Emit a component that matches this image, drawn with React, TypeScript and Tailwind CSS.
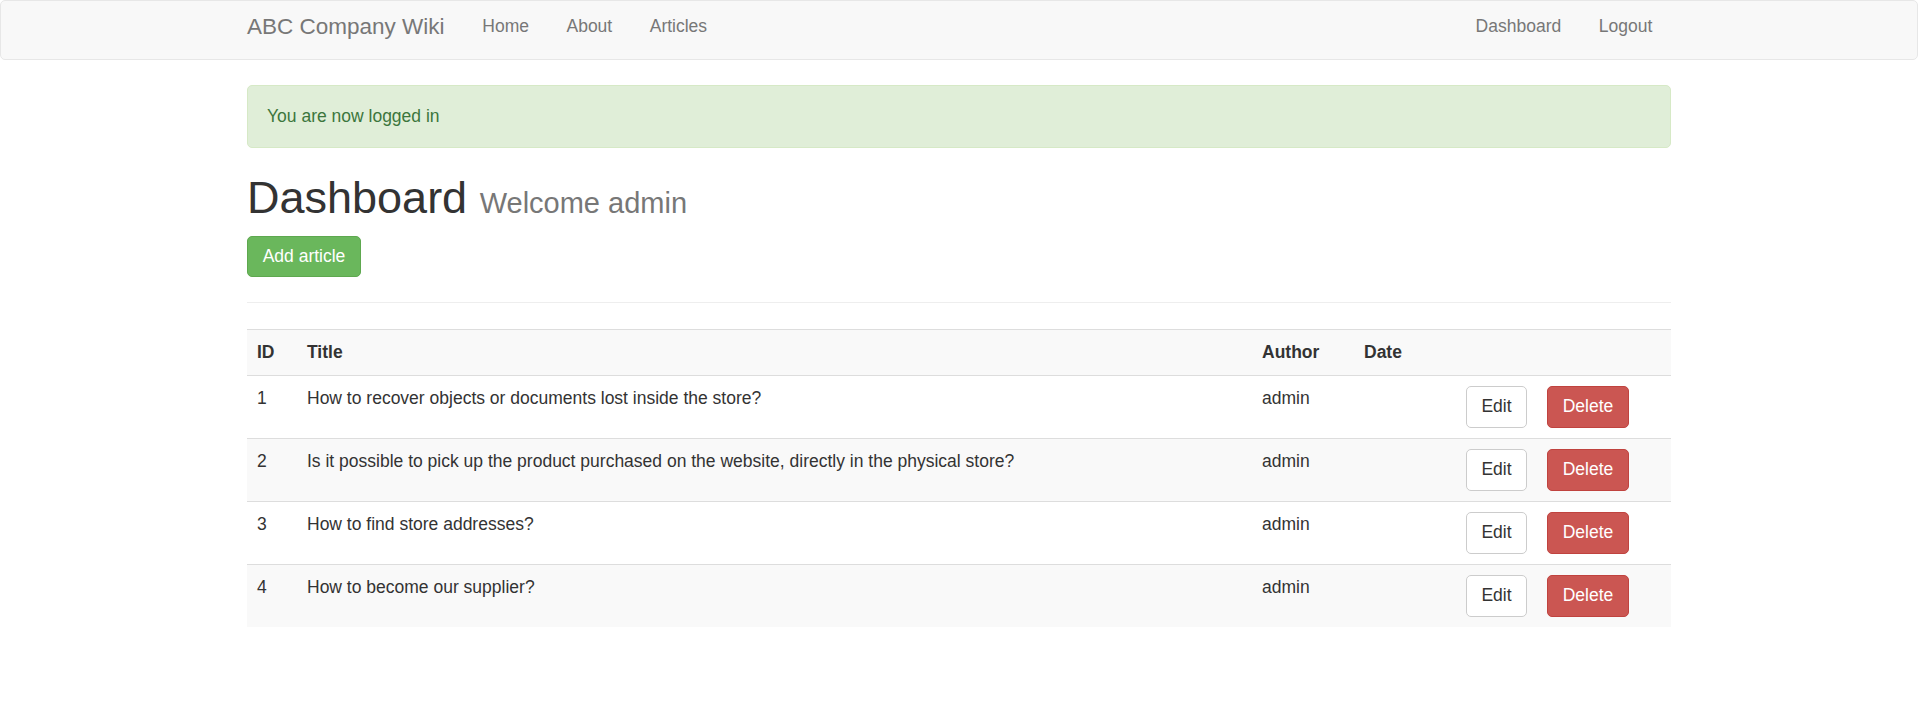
const articles = [
  { id: 1, title: "How to recover objects or documents lost inside the store?", author: "admin" },
  { id: 2, title: "Is it possible to pick up the product purchased on the website, directly in the physical store?", author: "admin" },
  { id: 3, title: "How to find store addresses?", author: "admin" },
  { id: 4, title: "How to become our supplier?", author: "admin" },
];

function Navbar() {
  return (
    <nav className="h-[60px] w-full rounded-[5px] border border-[#e7e7e7] bg-[#f8f8f8]">
      <div className="mx-auto flex h-full w-[1424px] items-center justify-between pb-[7px]">
        <div className="flex items-center">
          <a href="#" className="pr-[19px] text-[22.5px] leading-[25px] text-[#777]">
            ABC Company Wiki
          </a>
          {["Home", "About", "Articles"].map((link) => (
            <a key={link} href="#" className="px-[18.75px] text-[17.5px] leading-[25px] text-[#777]">
              {link}
            </a>
          ))}
        </div>
        <div className="flex items-center">
          {["Dashboard", "Logout"].map((link) => (
            <a key={link} href="#" className="px-[18.75px] text-[17.5px] leading-[25px] text-[#777]">
              {link}
            </a>
          ))}
        </div>
      </div>
    </nav>
  );
}

export default function App() {
  return (
    <div className="min-h-screen bg-white font-['Liberation_Sans',Arial,sans-serif] text-[17.5px] leading-[25px] text-[#333]">
      <Navbar />

      <main className="mx-auto mt-[25px] w-[1424px]">
        <div className="rounded-[5px] border border-[#d6e9c6] bg-[#e0eed8] px-[19px] py-[18px] text-[#3c763d]">
          You are now logged in
        </div>

        <h1 className="mt-[25px] mb-[13px] text-[45px] leading-[49.5px] text-[#333]">
          Dashboard <small className="text-[29px] leading-none text-[#777]">Welcome admin</small>
        </h1>

        <button className="h-[41px] w-[114px] rounded-[5px] border border-[#5ea84f] bg-[#6ab75c] text-white">
          Add article
        </button>

        <hr className="mt-[25px] mb-[26px] border-t border-[#eee]" />

        <table className="w-full table-fixed border-collapse">
          <tbody>
            <tr className="bg-[#f9f9f9]">
              <th className="w-[50px] border-t border-[#ddd] p-[10px] text-left align-top font-bold">ID</th>
              <th className="w-[955px] border-t border-[#ddd] p-[10px] text-left align-top font-bold">Title</th>
              <th className="w-[102px] border-t border-[#ddd] p-[10px] text-left align-top font-bold">Author</th>
              <th className="w-[102px] border-t border-[#ddd] p-[10px] text-left align-top font-bold">Date</th>
              <th className="w-[81px] border-t border-[#ddd] p-[10px]"></th>
              <th className="border-t border-[#ddd] p-[10px]"></th>
            </tr>
            {articles.map((a, i) => (
              <tr key={a.id} className={i % 2 === 1 ? "bg-[#f9f9f9]" : ""}>
                <td className="border-t border-[#ddd] p-[10px] align-top">{a.id}</td>
                <td className="border-t border-[#ddd] p-[10px] align-top">{a.title}</td>
                <td className="border-t border-[#ddd] p-[10px] align-top">{a.author}</td>
                <td className="border-t border-[#ddd] p-[10px] align-top"></td>
                <td className="border-t border-[#ddd] p-[10px] align-top">
                  <button className="h-[42px] w-[61px] rounded-[5px] border border-[#ccc] bg-white text-[#333]">
                    Edit
                  </button>
                </td>
                <td className="border-t border-[#ddd] p-[10px] align-top">
                  <button className="h-[42px] w-[82px] rounded-[5px] border border-[#c0433f] bg-[#cb5652] text-white">
                    Delete
                  </button>
                </td>
              </tr>
            ))}
          </tbody>
        </table>
      </main>
    </div>
  );
}
